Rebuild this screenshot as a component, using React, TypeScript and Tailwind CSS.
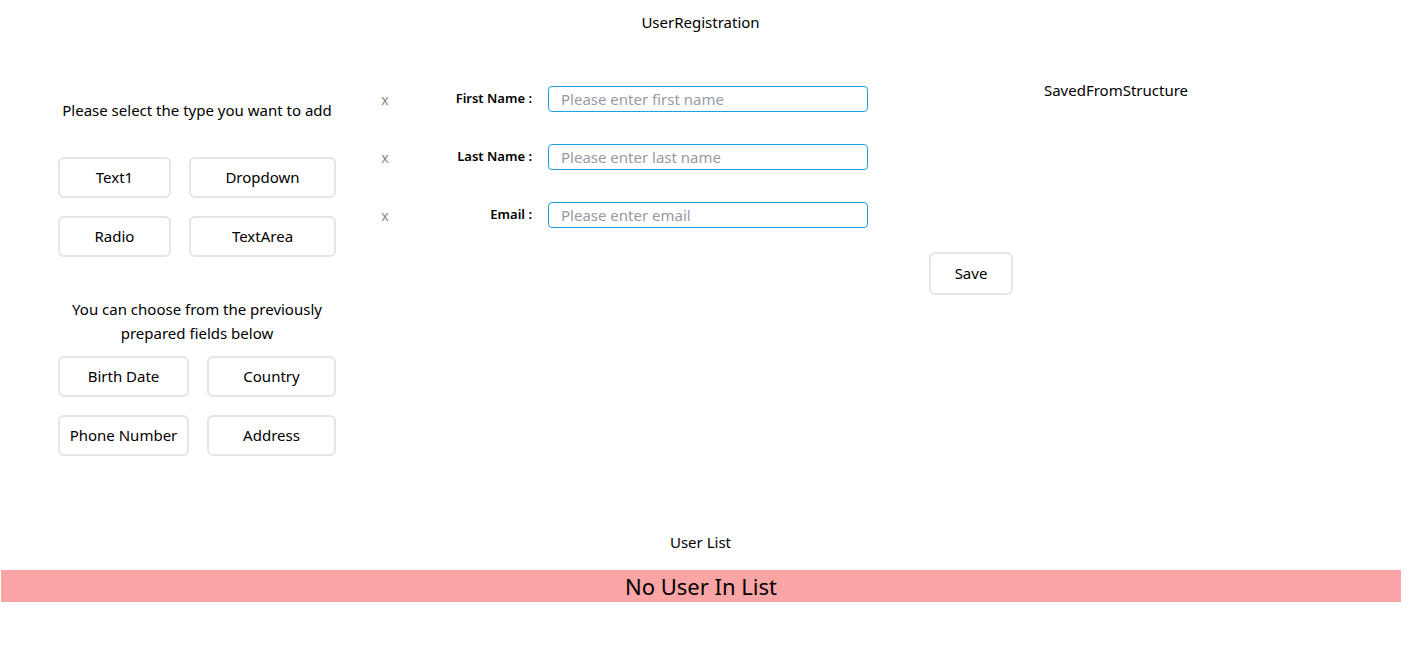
export default function App() {
  return (
    <div className="w-[1401px] font-['Noto_Sans',sans-serif] text-[15px] text-black bg-white">
      <div className="h-[44px] flex items-center justify-center">UserRegistration</div>

      <div className="flex h-[470px]">
        {/* field types */}
        <div className="w-[360px] pl-[34px] flex flex-col items-center pt-[54px]">
          <p className="leading-6">Please select the type you want to add</p>
          <div className="mt-[35px] grid grid-cols-[113px_147px] gap-x-[18px] gap-y-[18px]">
            {['Text1', 'Dropdown', 'Radio', 'TextArea'].map((t) => (
              <button
                key={t}
                className="h-[41px] rounded-md border-2 border-[#e4e4ea] bg-white text-[15px]"
              >
                {t}
              </button>
            ))}
          </div>
          <p className="mt-[40px] leading-6 text-center w-[280px]">
            You can choose from the previously prepared fields below
          </p>
          <div className="mt-[11px] grid grid-cols-[131px_129px] gap-x-[18px] gap-y-[18px]">
            {['Birth Date', 'Country', 'Phone Number', 'Address'].map((t) => (
              <button
                key={t}
                className="h-[41px] rounded-md border-2 border-[#e4e4ea] bg-white text-[15px]"
              >
                {t}
              </button>
            ))}
          </div>
        </div>

        {/* form */}
        <div className="w-[660px] pl-[10px] pt-[42px] flex flex-col">
          <div className="flex flex-col gap-[32px]">
            {[
              ['First Name :', 'Please enter first name'],
              ['Last Name :', 'Please enter last name'],
              ['Email :', 'Please enter email'],
            ].map(([label, ph]) => (
              <div key={label} className="flex items-center h-[26px]">
                <span className="w-[30px] text-center text-[#888] text-[14px]">x</span>
                <label className="w-[132px] text-right text-[13px] font-semibold">{label}</label>
                <input
                  placeholder={ph}
                  className="ml-[16px] w-[320px] h-[26px] rounded-[4px] border border-[#1a9fe0] px-3 text-[15px] placeholder:text-[#9a9aa2] outline-none"
                />
              </div>
            ))}
          </div>
          <div className="mt-[24px] pl-[559px]">
            <button className="w-[84px] h-[43px] rounded-md border-2 border-[#e4e4ea] bg-white text-[15px]">
              Save
            </button>
          </div>
        </div>

        {/* saved */}
        <div className="w-[192px] pt-[34px] text-center leading-6">SavedFromStructure</div>
      </div>

      <div className="mt-[16px] leading-6 text-center">User List</div>
      <div className="mt-[16px] ml-px w-[1400px] h-[32px] bg-[#faa5a5] flex items-center justify-center text-[22px]">
        No User In List
      </div>
    </div>
  )
}
